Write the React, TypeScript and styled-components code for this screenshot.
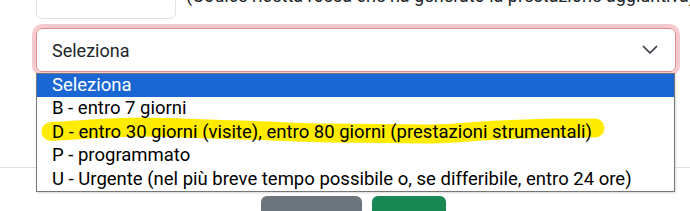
import React from "react";
import styled, { createGlobalStyle } from "styled-components";

const GlobalStyle = createGlobalStyle`
  html, body { margin: 0; padding: 0; background: #fff; }
  body { font-family: Roboto, "Liberation Sans", Arial, sans-serif; color: #212529; overflow: hidden; }
`;

const Page = styled.div`
  position: relative;
  width: 690px;
  height: 211px;
  overflow: hidden;
  background: #fff;
`;

const TopRow = styled.div`
  display: flex;
  align-items: flex-end;
  gap: 10px;
  margin-top: -20px;
  padding-left: 36px;
`;

const SmallInput = styled.div`
  width: 140px;
  height: 39px;
  box-sizing: border-box;
  border: 1px solid #dee2e6;
  border-radius: 6px;
  background: #fff;
  flex: none;
`;

const HelpText = styled.span`
  font-size: 18px;
  line-height: 22px;
  white-space: nowrap;
  color: #212529;
  margin-bottom: 12px;
`;

const SelectBox = styled.div`
  margin: 9px 14px 0 36px;
  height: 44px;
  box-sizing: border-box;
  border: 1px solid #e48a93;
  border-radius: 6px;
  box-shadow: 0 0 0 4px #f5cbcf;
  display: flex;
  align-items: center;
  justify-content: space-between;
  padding: 0 17px 0 15px;
  font-size: 18px;
  color: #212529;
`;

const Chevron = () => (
  <svg width="16" height="10" viewBox="0 0 16 10" fill="none">
    <path d="M1.5 1.5 L8 8 L14.5 1.5" stroke="#343a40" strokeWidth="1.7" strokeLinecap="round" strokeLinejoin="round" />
  </svg>
);

const OptionList = styled.div`
  position: absolute;
  top: 73px;
  left: 36px;
  width: 639px;
  box-sizing: border-box;
  border: 1px solid #767676;
  background: #fff;
  z-index: 2;
  box-shadow: 1px 1px 2px rgba(0, 0, 0, 0.15);
`;

const Option = styled.div<{ $active?: boolean }>`
  position: relative;
  height: 23.4px;
  line-height: 23.4px;
  padding-left: 15px;
  font-size: 18.5px;
  white-space: nowrap;
  color: ${(p) => (p.$active ? "#fff" : "#000")};
  background: ${(p) => (p.$active ? "#1a67d3" : "transparent")};
`;

const OptionText = styled.span`
  position: relative;
  z-index: 1;
`;

const Marker = styled.svg`
  position: absolute;
  left: -36px;
  top: -5px;
  pointer-events: none;
  z-index: 0;
`;

const Footer = styled.div`
  margin-top: 95px;
  border-top: 1px solid #dee2e6;
  padding-top: 28px;
  display: flex;
  justify-content: center;
  gap: 10px;
  padding-left: 17px;
`;

const Button = styled.div<{ $color: string; $w: number }>`
  width: ${(p) => p.$w}px;
  height: 38px;
  border-radius: 6px;
  background: ${(p) => p.$color};
`;

const options = [
  "Seleziona",
  "B - entro 7 giorni",
  "D - entro 30 giorni (visite), entro 80 giorni (prestazioni strumentali)",
  "P - programmato",
  "U - Urgente (nel più breve tempo possibile o, se differibile, entro 24 ore)",
];

export default function App() {
  return (
    <Page>
      <GlobalStyle />
      <TopRow>
        <SmallInput />
        <HelpText>(Codice ricetta rossa che ha generato la prestazione aggiuntiva)</HelpText>
      </TopRow>
      <SelectBox>
        <span>Seleziona</span>
        <Chevron />
      </SelectBox>
      <OptionList>
        {options.map((o, i) => (
          <Option key={o} $active={i === 0}>
            {i === 2 && (
              <Marker width="610" height="34" viewBox="0 0 610 34">
                <path
                  d="M50 15.5 C 80 14, 110 11, 139 11 S 200 13, 239 14 S 300 17, 329 17 S 400 18, 429 18 S 470 15, 499 14 S 540 12, 559 12 S 585 12, 594 12"
                  stroke="#ffec00"
                  strokeWidth="19"
                  strokeLinecap="round"
                  fill="none"
                />
              </Marker>
            )}
            <OptionText>{o}</OptionText>
          </Option>
        ))}
      </OptionList>
      <Footer>
        <Button $color="#6c757d" $w={101} />
        <Button $color="#198754" $w={74} />
      </Footer>
    </Page>
  );
}
